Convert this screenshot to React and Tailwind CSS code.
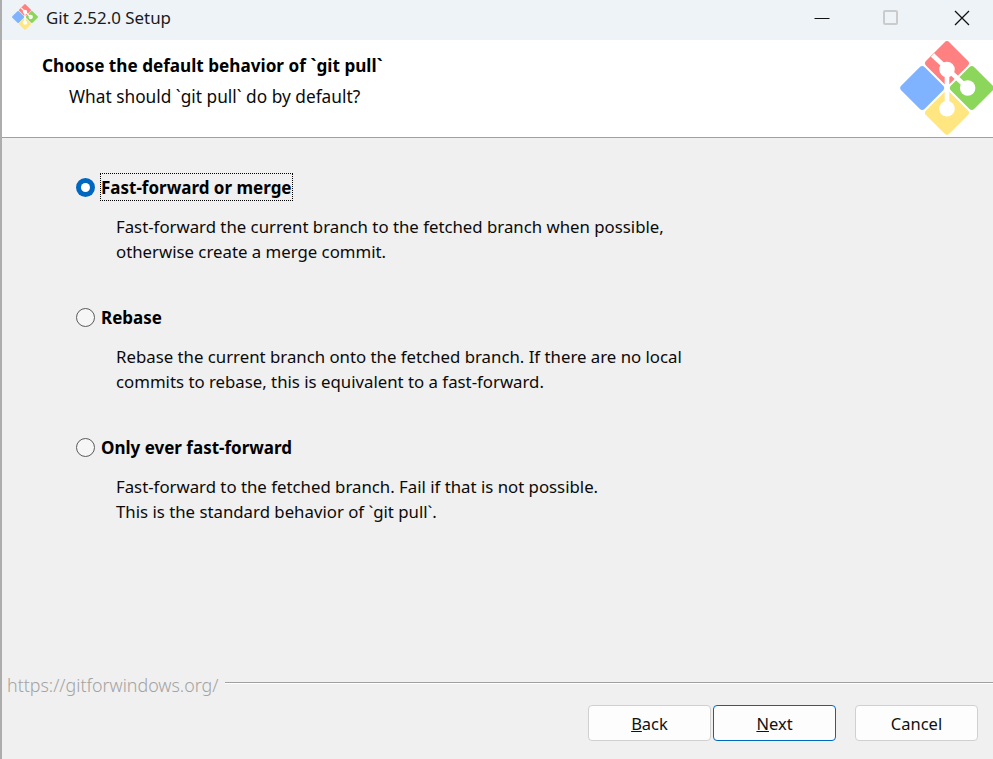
const FONT = "font-['Noto_Sans','Liberation_Sans',sans-serif]";

function GitLogo({ className }) {
  return (
    <svg viewBox="1.5 1.5 91 91" className={className}>
      <g transform="rotate(45 47 23)"><rect x="31" y="7" width="32" height="32" rx="3.5" fill="#ff8080" /></g>
      <g transform="rotate(45 23 47)"><rect x="7" y="31" width="32" height="32" rx="3.5" fill="#80b3ff" /></g>
      <g transform="rotate(45 71 47)"><rect x="55" y="31" width="32" height="32" rx="3.5" fill="#8cd65c" /></g>
      <g transform="rotate(45 47 71)"><rect x="31" y="55" width="32" height="32" rx="3.5" fill="#ffe680" /></g>
      <path d="M47 29V67" stroke="#fff" strokeWidth="4.5" fill="none" />
      <path d="M33 15L67 47" stroke="#fff" strokeWidth="4.5" fill="none" />
      <path d="M1 47L23 25M1 47L23 69" stroke="none" fill="none" />
      <circle cx="47" cy="29" r="7.5" fill="#fff" />
      <circle cx="67" cy="47" r="7.5" fill="#fff" />
      <circle cx="47" cy="67" r="7.5" fill="#fff" />
    </svg>
  );
}

function Radio({ checked }) {
  return checked ? (
    <span className="w-[19px] h-[19px] rounded-full bg-[#0067c0] flex items-center justify-center shrink-0">
      <span className="w-[9px] h-[9px] rounded-full bg-white" />
    </span>
  ) : (
    <span className="w-[19px] h-[19px] rounded-full border border-[#5a5a5a] bg-[#f6f6f6] shrink-0" />
  );
}

function Option({ checked, label, lines }) {
  return (
    <div className="h-[130px]">
      <div className="flex items-center h-[26px] gap-[6px]">
        <Radio checked={checked} />
        <span className={`font-bold text-[17px] leading-[26px] h-[26px] pt-px text-black ${checked ? "outline-1 outline-dotted outline-black" : ""}`}>
          {label}
        </span>
      </div>
      <div className="pl-[40px] mt-[14px] text-[16.8px] leading-[25px] text-[#0a0a0a]">
        {lines.map((l) => (
          <div key={l}>{l}</div>
        ))}
      </div>
    </div>
  );
}

function Btn({ children, primary, className = "" }) {
  return (
    <button className={`w-[123px] h-[36px] pt-[2px] rounded-[4px] bg-[#fdfdfd] border text-[16.5px] text-[#111] ${primary ? "border-[#0067c0]" : "border-[#d0d0d0]"} ${className}`}>
      {children}
    </button>
  );
}

export default function App() {
  return (
    <div className={`w-[993px] h-[759px] flex bg-[#f0f0f0] overflow-hidden ${FONT}`}>
      <div className="w-[2px] bg-[#adadad] shrink-0" />
      <div className="flex-1 flex flex-col min-w-0">
        <div className="h-[40px] pb-[5px] bg-[#eef3f8] flex items-center shrink-0">
          <GitLogo className="w-[26px] h-[26px] ml-[10px] -mt-px" />
          <span className="ml-[8px] text-[16.9px] text-[#1a1a1a]">Git 2.52.0 Setup</span>
          <div className="ml-auto flex items-center">
            <svg width="16" height="16" viewBox="0 0 16 16" className="mr-[53px]"><path d="M0.5 8.5H15.5" stroke="#111" strokeWidth="1" /></svg>
            <span className="w-[15px] h-[15px] border-2 border-[#cbcbcb] rounded-[2px] mr-[56px]" />
            <svg width="16" height="16" viewBox="0 0 16 16" className="mr-[23px]"><path d="M1 1L15 15M15 1L1 15" stroke="#111" strokeWidth="1.3" /></svg>
          </div>
        </div>
        <div className="h-[97px] bg-white flex justify-between shrink-0 border-b border-[#a0a0a0] box-content">
          <div className="pl-[40px] pt-[14px]">
            <div className="font-bold text-[17.15px] leading-[24px] text-black">Choose the default behavior of `git pull`</div>
            <div className="pl-[27px] mt-[6px] text-[17.3px] leading-[25px] text-[#0a0a0a]">What should `git pull` do by default?</div>
          </div>
          <GitLogo className="w-[94px] h-[94px] mt-[1px] -mr-[1px]" />
        </div>
        <div className="flex-1 pl-[74px] pt-[36px]">
          <Option checked label="Fast-forward or merge" lines={["Fast-forward the current branch to the fetched branch when possible,", "otherwise create a merge commit."]} />
          <Option label="Rebase" lines={["Rebase the current branch onto the fetched branch. If there are no local", "commits to rebase, this is equivalent to a fast-forward."]} />
          <Option label="Only ever fast-forward" lines={["Fast-forward to the fetched branch. Fail if that is not possible.", "This is the standard behavior of `git pull`."]} />
        </div>
        <div className="shrink-0 h-[88px]">
          <div className="flex items-center h-[24px] pl-[5px] gap-[7px]">
            <span className="text-[17.85px] leading-[24px] mt-[3px] font-light text-[#a3a3a3]">https://gitforwindows.org/</span>
            <div className="flex-1 border-t border-[#a0a0a0] border-b-white border-b" />
          </div>
          <div className="flex mt-[10px] pl-[586px]">
            <Btn><span className="underline">B</span>ack</Btn>
            <Btn primary className="ml-[2px]"><span className="underline">N</span>ext</Btn>
            <Btn className="ml-[19px]">Cancel</Btn>
          </div>
        </div>
      </div>
    </div>
  );
}
